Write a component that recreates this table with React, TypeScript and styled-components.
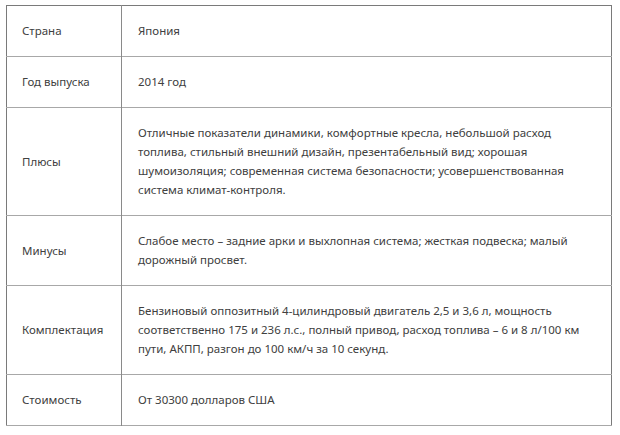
import styled, { createGlobalStyle } from "styled-components";

const GlobalStyle = createGlobalStyle`
  body {
    margin: 0;
    background: #ffffff;
    font-family: "Noto Sans", "Liberation Sans", sans-serif;
  }
`

const Page = styled.div`
  padding: 5px 8px 0 6px;
`

const SpecTable = styled.table`
  width: 606px;
  border-collapse: collapse;
  border: 1px solid #7a7a7a;
  table-layout: fixed;
`

const Row = styled.tr`
  border-bottom: 1px solid #a8a8a8;
`

// label column on the left
const Label = styled.td`
  box-sizing: border-box;
  width: 115px;
  padding: 15px 15px 16px;
  border-right: 1px solid #8a8a8a;
  font-size: 11.5px;
  line-height: 19px;
  color: #404040;
  vertical-align: middle;
`

const Value = styled.td`
  padding: 15px 22px 16px 16px;
  font-size: 11.5px;
  line-height: 19px;
  color: #404040;
  vertical-align: middle;
`

const rows = [
  { label: "Страна", value: "Япония" },
  { label: "Год выпуска", value: "2014 год" },
  {
    label: "Плюсы",
    value:
      "Отличные показатели динамики, комфортные кресла, небольшой расход топлива, стильный внешний дизайн, презентабельный вид; хорошая шумоизоляция; современная система безопасности; усовершенствованная система климат-контроля.",
  },
  {
    label: "Минусы",
    value: "Слабое место – задние арки и выхлопная система; жесткая подвеска; малый дорожный просвет.",
  },
  {
    label: "Комплектация",
    value:
      "Бензиновый оппозитный 4-цилиндровый двигатель 2,5 и 3,6 л, мощность соответственно 175 и 236 л.с., полный привод, расход топлива – 6 и 8 л/100 км пути, АКПП, разгон до 100 км/ч за 10 секунд.",
  },
  { label: "Стоимость", value: "От 30300 долларов США" },
]

const App = () => {
  return (
    <Page>
      <GlobalStyle />
      <SpecTable>
        <tbody>
          {rows.map((row, idx) => (
            <Row key={idx}>
              <Label>{row.label}</Label>
              <Value>{row.value}</Value>
            </Row>
          ))}
        </tbody>
      </SpecTable>
    </Page>
  )
}

export default App;
